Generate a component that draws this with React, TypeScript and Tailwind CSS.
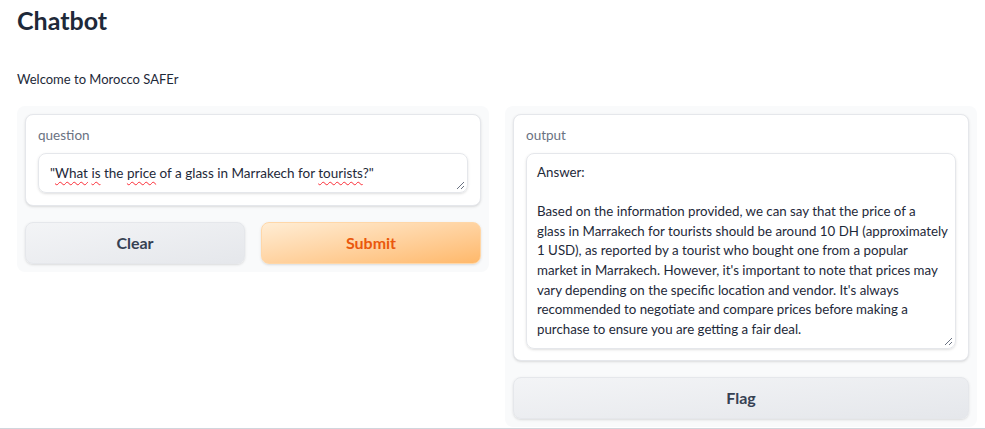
import React from 'react';

const font = { fontFamily: 'Lato, "Open Sans", sans-serif' };

const ResizeGrip: React.FC = () => (
  <svg className="absolute bottom-[2px] right-[2px] h-[9px] w-[9px] text-gray-500" viewBox="0 0 9 9" fill="none" stroke="currentColor" strokeWidth={1}>
    <path d="M8 1L1 8M8 5L5 8" />
  </svg>
);

const Squiggle: React.FC<{ children: React.ReactNode }> = ({ children }) => (
  <span className="underline decoration-wavy decoration-red-500 decoration-1 underline-offset-[3px]">{children}</span>
);

const answerLines = [
  'Answer:',
  '',
  'Based on the information provided, we can say that the price of a',
  'glass in Marrakech for tourists should be around 10 DH (approximately',
  '1 USD), as reported by a tourist who bought one from a popular',
  "market in Marrakech. However, it's important to note that prices may",
  "vary depending on the specific location and vendor. It's always",
  'recommended to negotiate and compare prices before making a',
  'purchase to ensure you are getting a fair deal.',
];

export default function App() {
  return (
    <div className="bg-white text-gray-800" style={font}>
      <div className="h-[429px] border-b border-gray-300 pl-[17px] pr-[8px]">
        <h1 className="pt-[5px] text-[25px] font-bold leading-[30px] text-gray-800">Chatbot</h1>
        <p className="mt-[34px] text-[13px] leading-[20px] text-gray-800">Welcome to Morocco SAFEr</p>

        <div className="mt-[17px] grid grid-cols-2 items-start gap-4">
          {/* inputs */}
          <div className="flex flex-col gap-4 rounded-lg bg-gray-50 p-2">
            <div className="rounded-lg border border-gray-200 bg-white px-3 pb-3 pt-[10px] shadow-sm">
              <div className="text-[13.5px] leading-[20px] text-gray-500">question</div>
              <div className="relative mt-[8px] rounded-lg border border-gray-200 px-[11px] py-[9px] text-[13.5px] leading-[20px] text-gray-800 shadow-sm">
                "<Squiggle>What</Squiggle> <Squiggle>is</Squiggle> the <Squiggle>price</Squiggle> of a glass in Marrakech for <Squiggle>tourists</Squiggle>?"
                <ResizeGrip />
              </div>
            </div>
            <div className="flex gap-4">
              <button className="h-[42px] flex-1 rounded-lg border border-gray-200 bg-gradient-to-br from-gray-100 to-gray-200 text-[16px] font-bold text-gray-700 shadow-sm">
                Clear
              </button>
              <button className="h-[42px] flex-1 rounded-lg border border-orange-200 bg-gradient-to-br from-orange-100 to-orange-300 text-[16px] font-bold text-[#ea580c] shadow-sm">
                Submit
              </button>
            </div>
          </div>

          {/* outputs */}
          <div className="flex min-w-0 flex-col gap-4 rounded-lg bg-gray-50 p-2">
            <div className="rounded-lg border border-gray-200 bg-white px-3 pb-[11px] pt-[10px] shadow-sm">
              <div className="text-[13.5px] leading-[20px] text-gray-500">output</div>
              <div className="relative mt-[8px] whitespace-pre rounded-lg border border-gray-200 px-[10px] py-[9px] text-[13.3px] leading-[19.6px] text-gray-800 shadow-sm">
                {answerLines.join('\n')}
                <ResizeGrip />
              </div>
            </div>
            <button className="h-[42px] rounded-lg border border-gray-200 bg-gradient-to-br from-gray-100 to-gray-200 text-[16px] font-bold text-gray-700 shadow-sm">
              Flag
            </button>
          </div>
        </div>
      </div>
    </div>
  );
}
